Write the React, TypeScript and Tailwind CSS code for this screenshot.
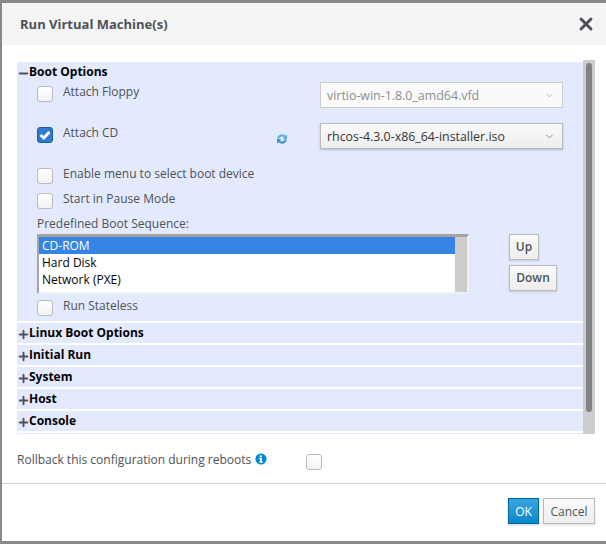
import { ChevronDown, Minus, Plus, X } from "lucide-react"

function Checkbox({ checked = false }: { checked?: boolean }) {
  if (checked) {
    return (
      <span className="flex h-4 w-4 shrink-0 items-center justify-center rounded-[3px] border border-[#1f5fa8] bg-[#2f7bd1]">
        <svg viewBox="0 0 12 12" className="h-3 w-3">
          <path d="M1.6 6 L4.8 9 L10.4 3" fill="none" stroke="#fff" strokeWidth="3" />
        </svg>
      </span>
    )
  }
  return <span className="block h-4 w-4 shrink-0 rounded-[3px] border border-[#bbb] bg-gradient-to-b from-white to-[#f2f2f2]" />
}

function SelectBox({ value, disabled = false }: { value: string; disabled?: boolean }) {
  return (
    <div
      className={
        disabled
          ? "flex h-[26px] w-[243px] items-center justify-between border border-[#ccc] bg-[#fafafa] pl-[6px] pr-[7px] text-[12.4px] text-[#8b8d8f]"
          : "flex h-[26px] w-[243px] items-center justify-between border border-[#bbb] bg-gradient-to-b from-[#fafafa] to-[#ededed] pl-[6px] pr-[7px] text-[12.4px] text-[#363636] shadow-[0_1px_2px_rgba(3,3,3,0.2)]"
      }
    >
      <span>{value}</span>
      <ChevronDown size={11} strokeWidth={1.5} className={disabled ? "text-[#999]" : "text-[#555]"} />
    </div>
  )
}

function CheckRow({ label, className }: { label: string; className: string }) {
  return (
    <div className={`flex gap-[10px] ${className}`}>
      <Checkbox />
      <span className="-mt-[3px] text-[#4d5258]">{label}</span>
    </div>
  )
}

function Collapsed({ title }: { title: string }) {
  return (
    <div className="mt-[2px] flex h-5 items-center bg-[#e4eafd] text-[#030303]">
      <Plus size={13} strokeWidth={3.5} className="-mr-[1px] mt-[3px] text-[#4d5258]" />
      <span className="-mt-[2px] font-bold">{title}</span>
    </div>
  )
}

export default function App() {
  return (
    <div className="h-[544px] w-[606px] overflow-hidden bg-[#8a8a8a] pl-[2px] pt-[3px] pb-[3px] text-[12px] leading-[17px] [font-family:'Open_Sans',sans-serif]">
      <div className="flex h-[538px] flex-col bg-white">
        <div className="flex h-[42px] shrink-0 items-center justify-between bg-[#f5f5f5] pl-[18px] pr-[10px]">
          <h1 className="text-[13px] font-bold text-[#4d5258]">Run Virtual Machine(s)</h1>
          <X size={20} strokeWidth={3.5} className="-mt-[1px] text-[#4d5258]" />
        </div>

        <div className="ml-[15px] mt-[15px] flex h-[374px] w-[578px]">
          <div className="mt-[2px] h-[372px] w-[566px] overflow-hidden">
            <div className="h-[259px] bg-[#e4eafd] pt-[1px]">
              <div className="flex h-[17px] items-center text-[#030303]">
                <Minus size={13} strokeWidth={3.5} className="-mr-[1px] mt-[3px] text-[#4d5258]" />
                <span className="font-bold">Boot Options</span>
              </div>

              <div className="mt-[2px] flex h-[26px] pl-[20px]">
                <div className="mt-[4px] flex w-[283px] gap-[10px]">
                  <Checkbox />
                  <span className="-mt-[3px] text-[#4d5258]">Attach Floppy</span>
                </div>
                <SelectBox value="virtio-win-1.8.0_amd64.vfd" disabled />
              </div>

              <div className="mt-[15px] flex h-[26px] pl-[20px]">
                <div className="mt-[4px] flex w-[239px] gap-[10px]">
                  <Checkbox checked />
                  <span className="-mt-[3px] text-[#4d5258]">Attach CD</span>
                </div>
                <svg viewBox="0 0 12 12" className="mt-[10px] h-3 w-3">
                  <path d="M1 5.4 A5 5 0 0 1 9.4 2.8 L11 1.4 V6 H6.6 L8.2 4.4 A3 3 0 0 0 3.2 5.4 Z" fill="#5aaee6" />
                  <path d="M11 6.6 A5 5 0 0 1 2.6 9.2 L1 10.6 V6 H5.4 L3.8 7.6 A3 3 0 0 0 8.8 6.6 Z" fill="#3d8fd6" />
                </svg>
                <div className="ml-[32px]">
                  <SelectBox value="rhcos-4.3.0-x86_64-installer.iso" />
                </div>
              </div>

              <CheckRow label="Enable menu to select boot device" className="mt-[19px] pl-[20px]" />
              <CheckRow label="Start in Pause Mode" className="mt-[9px] pl-[20px]" />

              <div className="mt-[6px] pl-[20px] text-[#4d5258]">Predefined Boot Sequence:</div>

              <div className="mt-[2px] flex pl-[20px]">
                <div className="flex h-[60px] w-[432px] border-b-2 border-l-2 border-r-2 border-t-[3px] border-b-[#f0f0f0] border-l-[#a3a3a3] border-r-[#f0f0f0] border-t-[#a3a3a3] bg-white">
                  <div className="flex-1 text-[#030303]">
                    <div className="bg-[#3584e4] pl-[3px] text-white">CD-ROM</div>
                    <div className="pl-[3px]">Hard Disk</div>
                    <div className="pl-[3px]">Network (PXE)</div>
                  </div>
                  <div className="w-3 bg-[#ccc]" />
                </div>
                <div className="ml-[40px] flex flex-col items-start gap-[5px] font-semibold text-[#4d5258]">
                  <button className="h-[26px] w-[30px] border border-[#bbb] bg-gradient-to-b from-[#fafafa] to-[#ededed] pb-[2px] shadow-[0_1px_2px_rgba(3,3,3,0.15)]">Up</button>
                  <button className="h-[26px] w-[48px] border border-[#bbb] bg-gradient-to-b from-[#fafafa] to-[#ededed] pb-[2px] shadow-[0_1px_2px_rgba(3,3,3,0.15)]">Down</button>
                </div>
              </div>

              <CheckRow label="Run Stateless" className="mt-[6px] pl-[20px]" />
            </div>

            <Collapsed title="Linux Boot Options" />
            <Collapsed title="Initial Run" />
            <Collapsed title="System" />
            <Collapsed title="Host" />
            <Collapsed title="Console" />
            <div className="mt-[2px] h-5 bg-[#e4eafd]" />
          </div>

          <div className="h-[374px] w-3 bg-[#ccc] px-[3px] pt-[3px]">
            <div className="h-[349px] rounded-[3px] bg-[#7f8383]" />
          </div>
        </div>

        <div className="ml-[15px] mt-[20px] flex h-4 items-start text-[#4d5258]">
          <span className="-mt-[3px]">Rollback this configuration during reboots</span>
          <svg viewBox="0 0 12 12" className="-mt-[1px] ml-[4px] h-3 w-3">
            <circle cx="6" cy="6" r="5.6" fill="#0088ce" />
            <path d="M4.6 2.4 H7 V4.2 H4.6 Z M4.2 5 H7 V8.4 H7.8 V9.8 H4.2 V8.4 H5 V6.4 H4.2 Z" fill="#fff" />
          </svg>
          <span className="ml-[39px]">
            <Checkbox />
          </span>
        </div>

        <div className="mt-[13px] border-t border-[#d1d1d1]" />

        <div className="mt-[14px] flex justify-end gap-1 pr-[11px]">
          <button className="h-[26px] w-[31px] border border-[#00659c] bg-gradient-to-b from-[#39a5dc] to-[#0088ce] text-white shadow-[0_1px_2px_rgba(3,3,3,0.2)]">OK</button>
          <button className="h-[26px] w-[52px] border border-[#bbb] bg-gradient-to-b from-[#fafafa] to-[#ededed] text-[#4d5258] shadow-[0_1px_2px_rgba(3,3,3,0.15)]">Cancel</button>
        </div>
      </div>
    </div>
  )
}
